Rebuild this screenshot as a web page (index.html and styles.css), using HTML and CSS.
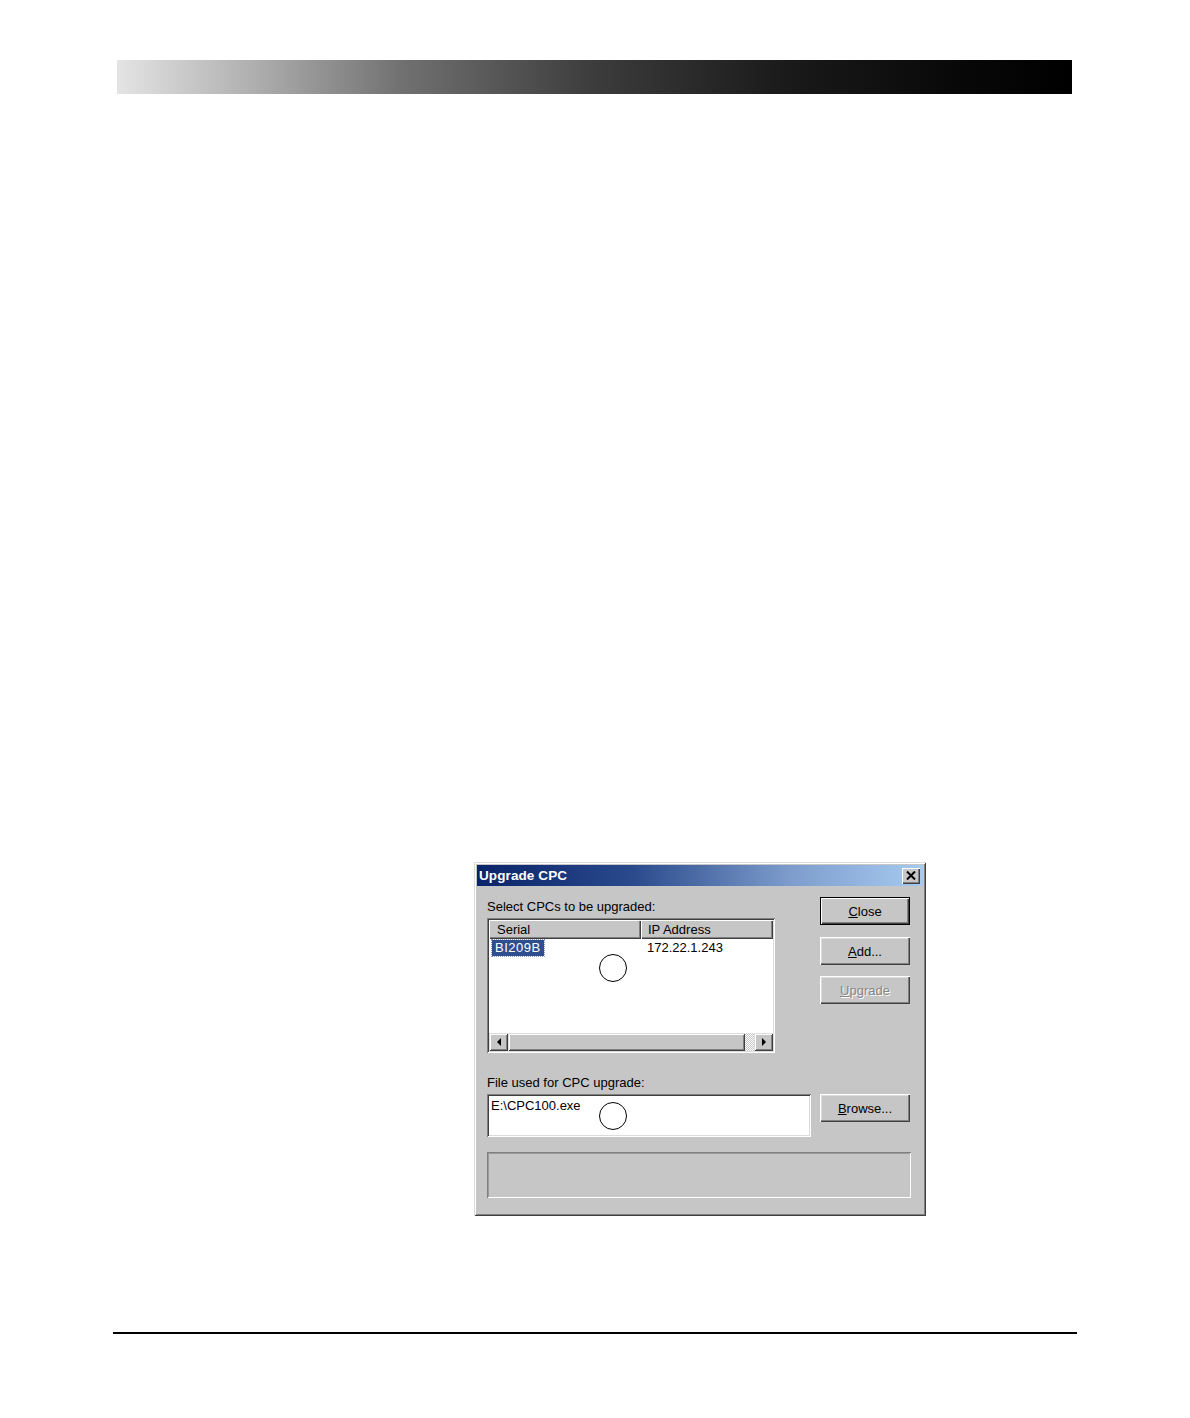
FILE: index.html
```html
<!DOCTYPE html>
<html>
<head>
<meta charset="utf-8">
<link rel="stylesheet" href="styles.css">
</head>
<body>
<div class="page">
  <div class="header-bar"></div>

  <div class="dialog">
    <div class="titlebar">
      <span class="title">Upgrade CPC</span>
      <span class="xbtn">
        <svg width="10" height="9" viewBox="0 0 10 9"><path d="M1 0.5 L9 8.5 M9 0.5 L1 8.5" stroke="#000" stroke-width="2" fill="none"/></svg>
      </span>
    </div>
    <div class="body">
      <div class="section">
        <div class="leftcol">
          <div class="label">Select CPCs to be upgraded:</div>
          <div class="listbox">
            <div class="listhead">
              <div class="col col-serial">Serial</div>
              <div class="col col-ip">IP Address</div>
            </div>
            <div class="listrows">
              <div class="row">
                <div class="cell cell-serial"><span class="sel">BI209B</span></div>
                <div class="cell cell-ip">172.22.1.243</div>
              </div>
            </div>
            <div class="hscroll">
              <div class="sbtn"><span class="arrow-left"></span></div>
              <div class="thumb"></div>
              <div class="track"></div>
              <div class="sbtn"><span class="arrow-right"></span></div>
            </div>
            <span class="callout callout-list"></span>
          </div>
        </div>
        <div class="rightcol">
          <div class="btn default"><span class="btn-inner"><u>C</u>lose</span></div>
          <div class="btn gap1"><u>A</u>dd...</div>
          <div class="btn disabled gap2"><u>U</u>pgrade</div>
        </div>
      </div>

      <div class="section section2">
        <div class="leftcol">
          <div class="label">File used for CPC upgrade:</div>
          <div class="textbox">E:\CPC100.exe<span class="callout callout-file"></span></div>
        </div>
        <div class="rightcol rightcol2">
          <div class="btn"><u>B</u>rowse...</div>
        </div>
      </div>

      <div class="status"></div>
    </div>
  </div>

  <div class="footer-line"></div>
</div>
</body>
</html>
```

FILE: styles.css
```css
html, body {
  margin: 0;
  padding: 0;
  background: #ffffff;
}

.page {
  width: 1190px;
  min-height: 1418px;
  padding-top: 60px;
  box-sizing: border-box;
  font-family: "Liberation Sans", Arial, sans-serif;
  font-size: 13px;
  color: #000;
}

.header-bar {
  margin-left: 117px;
  width: 955px;
  height: 34px;
  background: linear-gradient(to right, #e4e4e4 0%, #b0b0b0 14%, #707070 30%, #3c3c3c 50%, #1a1a1a 70%, #080808 88%, #000 100%);
}

.dialog {
  margin-top: 768px;
  margin-left: 474px;
  width: 452px;
  height: 354px;
  box-sizing: border-box;
  padding: 3px;
  background: #c6c6c6;
  box-shadow: inset 1px 1px #dcdcdc, inset -1px -1px #404040, inset 2px 2px #ffffff, inset -2px -2px #808080;
  display: flex;
  flex-direction: column;
}

.titlebar {
  height: 21px;
  background: linear-gradient(to right, #0a246a 0%, #2a4a8c 35%, #7d9ccc 70%, #a6caf0 100%);
  display: flex;
  align-items: center;
  justify-content: space-between;
  padding: 0 3px 0 2px;
}

.title {
  color: #fff;
  font-weight: bold;
  font-size: 13.5px;
  letter-spacing: 0.1px;
}

.xbtn {
  width: 18px;
  height: 16px;
  background: #c6c6c6;
  box-shadow: inset 1px 1px #fff, inset -1px -1px #404040, inset -2px -2px #808080;
  display: flex;
  align-items: center;
  justify-content: center;
}

.body {
  padding: 11px 13px 0 10px;
  display: flex;
  flex-direction: column;
}

.section {
  display: flex;
  gap: 9px;
}

.leftcol {
  width: 324px;
  display: flex;
  flex-direction: column;
}

.rightcol {
  width: 90px;
  display: flex;
  flex-direction: column;
}

.label {
  height: 17px;
  line-height: 17px;
  margin-top: 1px;
  margin-bottom: 3px;
  white-space: nowrap;
}

.listbox {
  position: relative;
  width: 288px;
  height: 135px;
  box-sizing: border-box;
  padding: 2px;
  background: #fff;
  box-shadow: inset 1px 1px #808080, inset -1px -1px #ffffff, inset 2px 2px #404040, inset -2px -2px #dcdcdc;
  display: flex;
  flex-direction: column;
}

.listhead {
  height: 19px;
  display: flex;
  background: #c6c6c6;
}

.col {
  box-sizing: border-box;
  height: 19px;
  line-height: 20px;
  box-shadow: inset 1px 1px #fff, inset -1px -1px #404040, inset -2px -2px #808080;
  white-space: nowrap;
}

.col-serial {
  width: 152px;
  padding-left: 8px;
}

.col-ip {
  flex: 1;
  padding-left: 7px;
}

.listrows {
  flex: 1;
  background: #fff;
}

.row {
  display: flex;
  height: 17px;
  margin-top: 1px;
}

.cell {
  line-height: 16px;
  white-space: nowrap;
}

.cell-serial {
  width: 153px;
  padding-left: 3px;
}

.sel {
  display: inline-block;
  background: #2e4e8e;
  color: #fff;
  padding: 0 3px 0 3px;
  height: 16px;
  letter-spacing: 0.5px;
  outline: 1px dotted #8898c0;
}

.cell-ip {
  padding-left: 2px;
}

.hscroll {
  height: 18px;
  display: flex;
  background: #c6c6c6;
}

.sbtn {
  width: 19px;
  height: 18px;
  box-sizing: border-box;
  background: #c6c6c6;
  box-shadow: inset 1px 1px #dcdcdc, inset -1px -1px #404040, inset 2px 2px #fff, inset -2px -2px #808080;
  display: flex;
  align-items: center;
  justify-content: center;
}

.arrow-left {
  width: 0;
  height: 0;
  border-top: 4px solid transparent;
  border-bottom: 4px solid transparent;
  border-right: 4px solid #000;
}

.arrow-right {
  width: 0;
  height: 0;
  border-top: 4px solid transparent;
  border-bottom: 4px solid transparent;
  border-left: 4px solid #000;
}

.thumb {
  width: 237px;
  height: 18px;
  background: #c6c6c6;
  box-shadow: inset 1px 1px #dcdcdc, inset -1px -1px #404040, inset 2px 2px #fff, inset -2px -2px #808080;
}

.track {
  flex: 1;
  background-color: #e6e6e6;
  background-image: repeating-conic-gradient(#c6c6c6 0 25%, #ffffff 0 50%);
  background-size: 2px 2px;
}

.callout {
  position: absolute;
  width: 28px;
  height: 28px;
  box-sizing: border-box;
  border: 1px solid #000;
  border-radius: 50%;
}

.callout-list {
  left: 112px;
  top: 36px;
}

.callout-file {
  left: 112px;
  top: 8px;
}

.btn {
  height: 28px;
  box-sizing: border-box;
  background: #c6c6c6;
  box-shadow: inset 1px 1px #ffffff, inset -1px -1px #404040, inset -2px -2px #808080, inset 2px 2px #dcdcdc;
  display: flex;
  align-items: center;
  justify-content: center;
  white-space: nowrap;
}

.btn.default {
  box-shadow: inset 0 0 0 1px #000, inset 2px 2px #ffffff, inset -2px -2px #404040, inset -3px -3px #808080;
}

.gap1 {
  margin-top: 12px;
}

.gap2 {
  margin-top: 11px;
}

.btn.disabled {
  color: #868686;
  text-shadow: 1px 1px 0 #ffffff;
}

.section2 {
  margin-top: 20px;
}

.rightcol2 {
  padding-top: 21px;
}

.textbox {
  position: relative;
  width: 324px;
  height: 43px;
  box-sizing: border-box;
  padding: 4px 4px;
  line-height: 15px;
  background: #fff;
  box-shadow: inset 1px 1px #808080, inset -1px -1px #ffffff, inset 2px 2px #404040, inset -2px -2px #dcdcdc;
  white-space: nowrap;
}

.status {
  margin-top: 15px;
  width: 424px;
  height: 46px;
  box-sizing: border-box;
  box-shadow: inset 1px 1px #808080, inset -1px -1px #ffffff, inset 2px 2px #9a9a9a;
}

.footer-line {
  margin-top: 116px;
  margin-left: 113px;
  width: 964px;
  height: 2px;
  background: #000;
}
```
